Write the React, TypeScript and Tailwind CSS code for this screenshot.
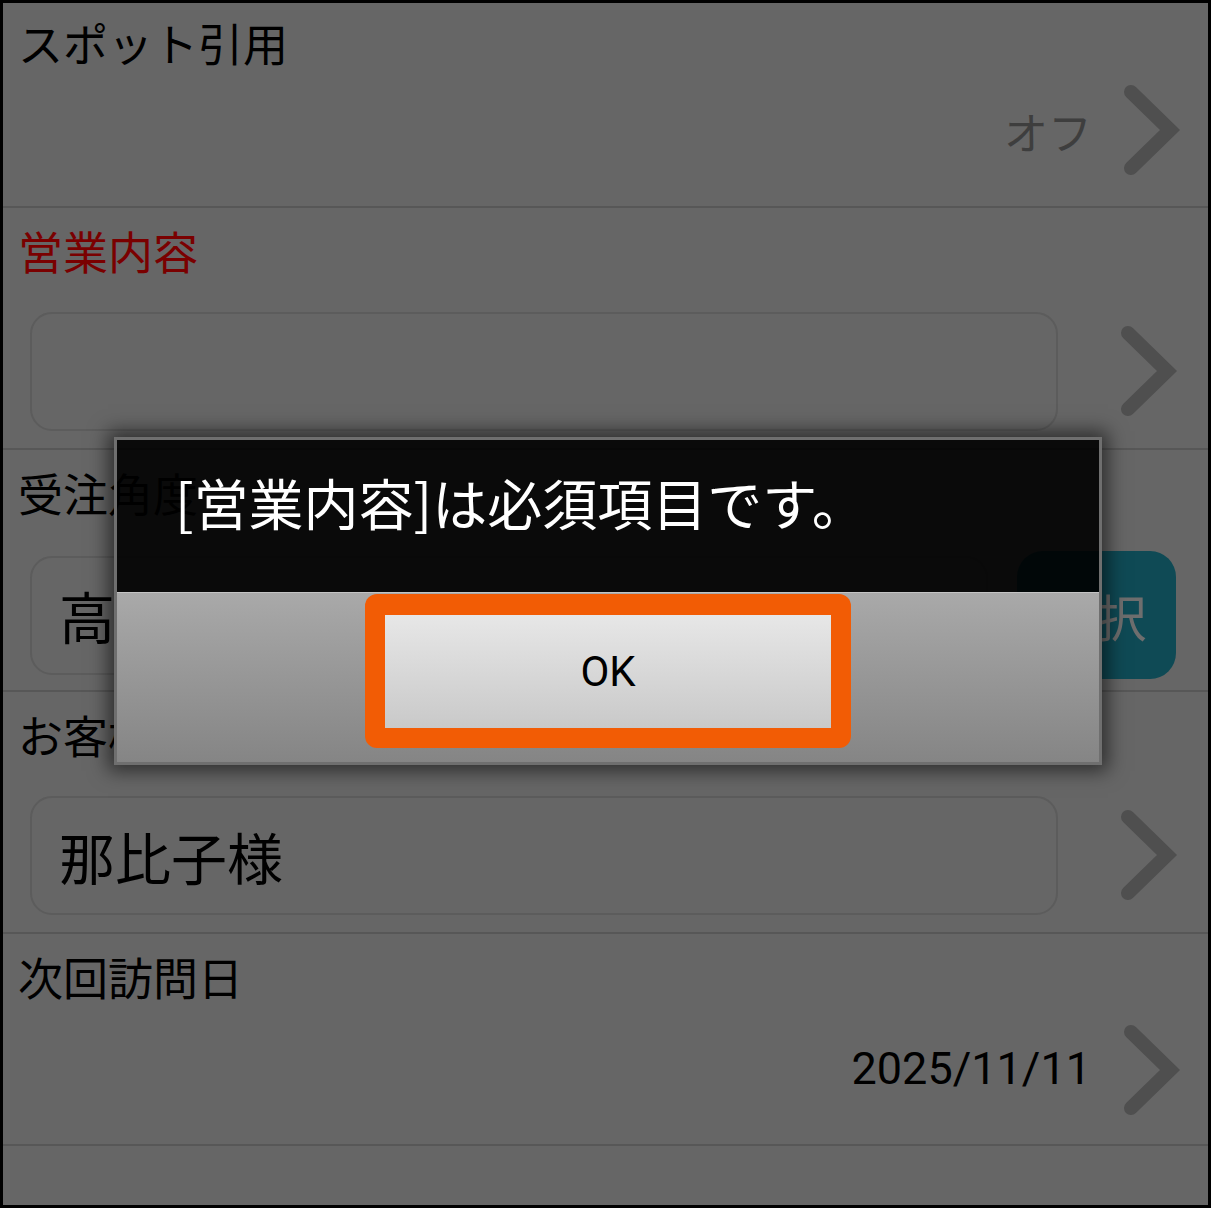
const jp = "font-['Noto_Sans_CJK_JP',sans-serif]"

const Chevron = ({ className = "" }: { className?: string }) => (
    <svg width="60" height="94" viewBox="0 0 60 94" className={`shrink-0 ${className}`}>
        <path d="M9 8 L48 46 L9 84" fill="none" stroke="#4f4f4f" strokeWidth="14" strokeLinecap="round" strokeLinejoin="miter" />
    </svg>
)

interface RowProps {
    label: string
    required?: boolean
    height: string
    top?: string
    children: React.ReactNode
}

const Row = ({ label, required, height, top = "pt-[21px]", children }: RowProps) => (
    <div className={`flex flex-col border-b-2 border-[#575757] ${height} ${top}`}>
        <p className={`pl-[15px] text-[45px] leading-[44px] ${required ? "text-[#7a0000]" : "text-black"}`}>{label}</p>
        {children}
    </div>
)

const InputBox = ({ width, children }: { width: string; children?: React.ReactNode }) => (
    <div className={`ml-[27px] flex h-[119px] items-center rounded-[22px] border-2 border-[#5c5c5c] pl-[27px] text-[56px] leading-none text-black ${width}`}>
        {children}
    </div>
)

const App = () => {
    return (
        <div className={`relative flex h-[1208px] w-[1211px] flex-col overflow-hidden border-[3px] border-black bg-[#666666] ${jp}`}>
            <Row label="スポット引用" height="h-[205px]" top="pt-[18px]">
                <div className="mt-[19px] flex items-center justify-end pr-[26px]">
                    <span className="text-[44px] leading-none text-[#3e3e3e]">オフ</span>
                    <Chevron className="ml-[30px]" />
                </div>
            </Row>

            <Row label="営業内容" required height="h-[242px]">
                <div className="mt-[39px] flex items-center">
                    <InputBox width="w-[1028px]" />
                    <Chevron className="ml-[61px]" />
                </div>
            </Row>

            <Row label="受注角度" height="h-[242px]">
                <div className="mt-[36px] flex items-center">
                    <InputBox width="w-[958px]">高</InputBox>
                    <div className="ml-[29px] flex h-[128px] w-[159px] items-center justify-center rounded-[26px] bg-[#0f4a55] text-[50px] leading-none text-[#6e6e6e]">
                        選択
                    </div>
                </div>
            </Row>

            <Row label="お客様" height="h-[242px]">
                <div className="mt-[39px] flex items-center">
                    <InputBox width="w-[1028px]">那比子様</InputBox>
                    <Chevron className="ml-[61px]" />
                </div>
            </Row>

            <Row label="次回訪問日" height="h-[212px]">
                <div className="mt-[25px] flex items-center justify-end pr-[26px]">
                    <span className="mb-[6px] font-['Roboto',sans-serif] text-[45px] leading-none text-black">2025/11/11</span>
                    <Chevron className="ml-[31px]" />
                </div>
            </Row>

            <div className="flex-1" />

            {/* alert dialog */}
            <div className="absolute left-[111px] top-[434px] flex w-[988px] flex-col border-[3px] border-[#6f6f6f] shadow-[0_0_18px_6px_rgba(0,0,0,0.55)]">
                <div className="h-[152px] bg-black/90 pl-[58px] pt-[34px] text-[55px] leading-none text-white">
                    [営業内容]は必須項目です。
                </div>
                <div className="flex h-[170px] justify-center border-t border-[#c4c4c4] bg-linear-to-b from-[#a9a9a9] to-[#858585] pt-[1px]">
                    <div className="h-[154px] rounded-[12px] bg-[#f25c05] p-[20px] pt-[21px]">
                        <div className="flex h-[113px] w-[446px] items-center justify-center bg-linear-to-b from-[#e7e7e7] to-[#c9c9c9] font-['Roboto',sans-serif] text-[42px] leading-none text-black">
                            OK
                        </div>
                    </div>
                </div>
            </div>
        </div>
    )
}

export default App
